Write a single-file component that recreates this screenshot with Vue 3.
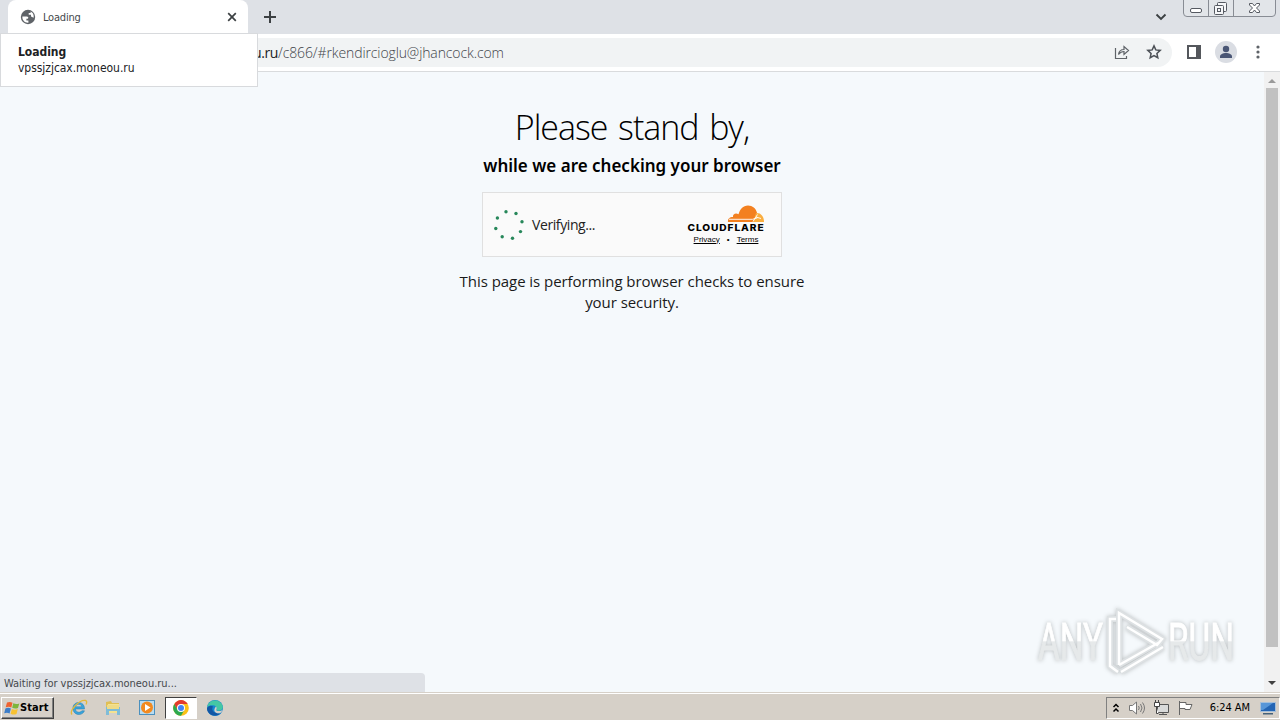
<template>
  <div class="desktop">
    <header class="tab-strip">
      <div class="tab">
        <svg class="globe" viewBox="0 0 16 16" width="16" height="16">
          <circle cx="8" cy="8" r="7.2" fill="#5f6368" />
          <path d="M2.4 7.5h4.2c1.8 0 2.2 1.4 1.2 2.2H6.4v1.8h2v2.2C4.700 14 2 11 2.400 7.500zM7 2.500h3.600v1.600H8.700v1.700H11v1.700l2.600 1.300c.7-3-1-5.500-3-6.300z" fill="#fff" />
        </svg>
        <span class="tab-title">Loading</span>
        <svg class="tab-close" viewBox="0 0 10 10" width="10" height="10">
          <path d="M1.200 1.200l7.600 7.600M8.800 1.200L1.200 8.800" stroke="#3c4043" stroke-width="1.700" />
        </svg>
      </div>
      <svg class="new-tab" viewBox="0 0 12 12" width="12" height="12">
        <path d="M6 0v12M0 6h12" stroke="#3c4043" stroke-width="2" />
      </svg>
      <svg class="tab-search" viewBox="0 0 12 8" width="12" height="8">
        <path d="M1.500 1.500L6 6l4.500-4.500" fill="none" stroke="#3c4043" stroke-width="1.900" />
      </svg>
      <svg class="window-buttons" viewBox="0 0 94 18" width="94" height="18">
        <path d="M.5 0v13q0 3.500 3.500 3.500h85q3.500 0 3.500-3.500V0" fill="#e2e5e9" stroke="#888c94" />
        <path d="M25.500 0v16M50.500 0v16" stroke="#888c94" />
        <rect x="7.500" y="8.500" width="11" height="4" rx="1.500" fill="#fff" stroke="#555961" />
        <g fill="#f5f6f8" stroke="#555961">
          <rect x="34.500" y="2.500" width="9" height="9" rx="1" />
          <rect x="31.500" y="5.500" width="9" height="9" rx="1" />
          <rect x="34.500" y="8.500" width="3" height="3" />
        </g>
        <path d="M66.500 3.500h3l2 2.500 2-2.500h3v1.500l-3 3 3 3v1.500h-3l-2-2.500-2 2.500h-3V11l3-3-3-3z" fill="#fff" stroke="#555961" />
      </svg>
    </header>

    <div class="toolbar">
      <div class="omnibox">
        <span class="url"><b>u.ru</b>/c866/#rkendircioglu@jhancock.com</span>
        <svg class="share" viewBox="0 0 16 16" width="16" height="16">
          <path d="M1.500 4v10.500h11V12M4.500 10.500c.5-3.500 2.500-5 5.500-5v-3l4.500 4-4.500 4v-3c-2.500 0-4 1-5.500 3z" fill="none" stroke="#5f6368" stroke-width="1.200" />
        </svg>
        <svg class="star" viewBox="0 0 16 16" width="16" height="16">
          <path d="M8 1.900l1.800 4 4.400.5-3.300 3 .9 4.300L8 11.500l-3.800 2.200.9-4.300-3.300-3 4.400-.5z" fill="none" stroke="#4d5157" stroke-width="1.500" />
        </svg>
      </div>
      <svg class="side-panel" viewBox="0 0 14 14" width="14" height="14">
        <path d="M0 0h14v14H0zM2 2v10h7V2z" fill="#54575c" fill-rule="evenodd" />
      </svg>
      <svg class="avatar" viewBox="0 0 22 22" width="22" height="22">
        <circle cx="11" cy="11" r="11" fill="#dadde3" />
        <circle cx="11" cy="8" r="3.200" fill="#4a5675" />
        <path d="M5 17v-1.500c0-2.300 3-3.500 6-3.500s6 1.200 6 3.500V17z" fill="#4a5675" />
      </svg>
      <svg class="menu" viewBox="0 0 4 14" width="4" height="14">
        <circle v-for="y in [2, 7, 12]" :key="y" cx="2" :cy="y" r="1.600" fill="#5f6368" />
      </svg>
    </div>

    <div class="viewport">
      <main class="page">
        <h1><span>Please stand by,</span></h1>
        <h2><span>while we are checking your browser</span></h2>
        <div class="challenge">
          <svg class="spinner" viewBox="0 0 30 30" width="30" height="30">
            <circle v-for="(dot, i) in dots" :key="i" :cx="dot[0]" :cy="dot[1]" r="1.700" fill="#27875a" />
          </svg>
          <span class="verifying">Verifying...</span>
          <div class="brand">
            <svg viewBox="0 0 78 28" width="78" height="28">
              <path d="M41 18c-.5-3 1.500-5 5-5-.5-3 3-4.500 5.500-2.700C53 5 56 1.500 61 1.500c4.500 0 8 3 9 7.200L67 18z" fill="#f38020" />
              <path d="M69 9c4.500-.5 8 3 8 9H66z" fill="#faae40" />
              <path d="M42 15.300h23.500l5-1.500M66 17.500l4.500-7M69 13l5 1.500" fill="none" stroke="#fff" stroke-width=".9" />
              <text x="0.500" y="27" textLength="77" lengthAdjust="spacingAndGlyphs" class="wordmark">CLOUDFLARE</text>
            </svg>
            <div class="links"><a>Privacy</a><i>•</i><a>Terms</a></div>
          </div>
        </div>
        <p><span>This page is performing browser checks to ensure</span><br /><span class="line-two">your security.</span></p>

        <svg class="watermark" viewBox="0 0 204 70" width="204" height="70">
          <defs>
            <linearGradient id="fade" gradientUnits="userSpaceOnUse" x1="0" y1="16" x2="0" y2="54">
              <stop offset=".46" stop-color="#fff" />
              <stop offset=".5" stop-color="#e6e9ea" />
            </linearGradient>
          </defs>
          <text x="4" y="53" textLength="65" lengthAdjust="spacingAndGlyphs">ANY</text>
          <text x="134" y="53" textLength="66" lengthAdjust="spacingAndGlyphs">RUN</text>
          <path :d="logo" class="outline" />
          <path :d="logo" class="mark" />
        </svg>
        <div class="status">Waiting for vpssjzjcax.moneou.ru...</div>
      </main>
      <div class="scrollbar">
        <svg viewBox="0 0 8 4" width="8" height="4"><path d="M0 4l4-4 4 4z" fill="#9a9a9a" /></svg>
        <div class="thumb"></div>
        <svg class="down" viewBox="0 0 8 4" width="8" height="4"><path d="M0 0l4 4 4-4z" fill="#404040" /></svg>
      </div>
    </div>

    <footer class="taskbar">
      <button class="start">
        <svg viewBox="0 0 16 16" width="16" height="16">
          <path d="M3 2.500c2-1 4-.7 5.500.2L7.300 7.500C5.500 6.500 4 6.500 1.700 7.300z" fill="#ee6230" />
          <path d="M9.300 3.200c2 1 3.800 1 6 .2L14 8c-2.300 1-4 .7-5.800-.2z" fill="#7db53c" />
          <path d="M1.400 8.400c2-.9 3.800-.8 5.500.1l-1.300 5c-1.800-1-3.300-1-5.400-.2z" fill="#3c7dc8" />
          <path d="M7.900 9c1.900.9 3.600 1 5.900.1l-1.300 4.800c-2.200 1-4 .8-5.900-.2z" fill="#f8c231" />
        </svg>
        <span>Start</span>
      </button>
      <div class="apps">
        <div class="app">
          <svg viewBox="0 0 18 18" width="18" height="18">
            <path d="M14.500 10H5.300c.4 3.500 5 4.200 6.500 1.800h2.700c-2.500 6-11.600 4.500-11.600-2.600 0-7.500 11.800-8 11.600.8zM5.500 7.800h6.400C11.300 4.500 6.200 4.500 5.500 7.800z" fill="#38a5dc" stroke="#2478ae" stroke-width=".5" />
            <path d="M2 15.500C-1 12 9 .5 15.500 1.500c1.500.3 1.500 2 .5 4" fill="none" stroke="#e3b93a" stroke-width="1.300" />
          </svg>
        </div>
        <div class="app">
          <svg viewBox="0 0 18 18" width="18" height="18">
            <path d="M2 3l5-1 1 2h7v10H2z" fill="#e0bf55" />
            <path d="M4 5h11l1 9H3z" fill="#f5e290" />
            <path d="M2 8h14v8h-3v-4H5v4H2z" fill="#7fbcd8" />
            <path d="M3 6h12v4H3z" fill="#efdb86" />
          </svg>
        </div>
        <div class="app">
          <svg viewBox="0 0 18 18" width="18" height="18">
            <rect x="1.500" y="1.500" width="15" height="14" fill="#b9dcf1" stroke="#4b90be" />
            <circle cx="9" cy="8.500" r="6" fill="#f28a20" />
            <path d="M7 5v7l5.500-3.500z" fill="#fff" />
          </svg>
        </div>
        <div class="app active">
          <svg viewBox="0 0 16 16" width="16" height="16">
            <circle cx="8" cy="8" r="7.800" fill="#fbc116" />
            <path d="M1.300 4A7.800 7.800 0 0 1 14.800 4H8L4.600 10z" fill="#e33b2e" />
            <path d="M1.300 4A7.800 7.800 0 0 0 8 15.800l3.400-5.900H4.600z" fill="#2da94f" />
            <circle cx="8" cy="8" r="4" fill="#fff" />
            <circle cx="8" cy="8" r="3" fill="#4285f4" />
          </svg>
        </div>
        <div class="app">
          <svg viewBox="0 0 18 18" width="18" height="18">
            <circle cx="9" cy="9" r="8" fill="#1685d1" />
            <path d="M1.500 7C3 0 14.500-1 16.800 7.500c.5 4-3.800 5-6.500 3.800 1.500-3-1-5.500-4-5C4 6 2 7 1.500 9z" fill="#45c7a4" />
            <path d="M7 7.500c-2 3 0 7.500 7.500 7C9 19 1 15.500 1 9.500 2 6.500 5 6 7 7.500z" fill="#1357a4" />
            <path d="M10 7.500c1.200 1.200.7 2.500.2 3.700 2 1.500 5 .8 6.500-.4-.7 2-1.700 3-3 3.500-5 .5-7-3-3.700-6.800z" fill="#d6d0c8" />
          </svg>
        </div>
      </div>
      <div class="tray">
        <svg class="chevrons" viewBox="0 0 8 10" width="8" height="10">
          <path d="M1.500 4L4 1.500 6.500 4M1.500 8.500L4 6l2.500 2.500" fill="none" stroke="#000" stroke-width="1.500" />
        </svg>
        <svg viewBox="0 0 18 16" width="18" height="16">
          <path d="M1.500 5.500h3L8.500 2v12l-4-3.500h-3z" fill="#fff" stroke="#777" />
          <path d="M10.500 6q1.500 2 0 4M12.500 4q3 4 0 8M14.500 2.500q4 5.500 0 11" fill="none" stroke="#777" />
        </svg>
        <svg class="network" viewBox="0 0 18 16" width="18" height="16">
          <path d="M4.500 4.500h11v8h-11zM6 14.500h8M10 12.500v2" fill="#d9dada" stroke="#555" />
          <path d="M2.500 0v3M5.500 0v3M1.500 2.500h5v4h-5zM3.500 6.500v7h2" fill="#fff" stroke="#444" />
        </svg>
        <svg class="flag" viewBox="0 0 18 16" width="18" height="16">
          <path d="M2.500 1v14M3 2.500h6v2h6l-2 5H8v-1H3" fill="#fff" stroke="#666" />
        </svg>
        <span class="clock">6:24 AM</span>
        <svg class="show-desktop" viewBox="0 0 16 14" width="16" height="14">
          <path d="M.5 1.500h15v9H.5z" fill="#2465b4" stroke="#a4bfda" />
          <path d="M1 2h12L3 9H1z" fill="#5796d8" />
          <path d="M3 12h10v1.500H3z" fill="#456179" />
        </svg>
      </div>
    </footer>

    <div class="tab-tooltip">
      <strong>Loading</strong>
      <span>vpssjzjcax.moneou.ru</span>
    </div>
  </div>
</template>

<script setup>
const dots = [
  [12, 1.800], [22, 3.500], [28, 11.700], [26.500, 21.600],
  [18.500, 28.200], [8.200, 26.700], [1.800, 18.500], [3.400, 8],
]

// play triangle with a second edge behind it
const logo = 'M82 12h-6v47l8 6M85 58V6l43 26-5 6-30-18M85 58l39-22M87 65l42-25'
</script>

<style>
body {
  margin: 0;
  overflow: hidden;
}
</style>

<style scoped>
.desktop {
  position: relative;
  display: flex;
  flex-direction: column;
  width: 1280px;
  height: 720px;
  font-family: "Noto Sans", "Open Sans", sans-serif;
  color: #000;
}

svg {
  display: block;
  flex: none;
}

span,
strong {
  white-space: nowrap;
}

.tab-strip {
  display: flex;
  height: 34px;
  background: #dee1e6;
}

.tab {
  display: flex;
  align-items: center;
  box-sizing: border-box;
  width: 240px;
  margin-left: 8px;
  padding: 0 11px 0 12px;
  background: #fff;
  border-radius: 8px 8px 0 0;
}

.tab-title {
  flex: 1;
  margin-left: 7px;
  font-family: "DejaVu Sans Condensed", "DejaVu Sans", sans-serif;
  font-size: 11px;
  letter-spacing: -0.200px;
  color: #45484c;
}

.new-tab {
  margin: 11px 0 0 16px;
}

.tab-search {
  margin: 13px 16px 0 auto;
}

.window-buttons {
  margin-right: 3px;
}

.toolbar {
  display: flex;
  align-items: center;
  box-sizing: border-box;
  height: 38px;
  padding: 0 20px 1px 0;
  background: #fff;
  border-bottom: 1px solid #d9dbdd;
}

.omnibox {
  display: flex;
  align-items: center;
  box-sizing: border-box;
  width: 1092px;
  height: 29px;
  margin-left: 80px;
  padding: 0 10px 0 173px;
  background: #f1f3f4;
  border-radius: 15px;
}

.url {
  flex: 1;
  font-family: "Open Sans", sans-serif;
  font-size: 14px;
  font-weight: 300;
  letter-spacing: -0.110px;
  color: #3f4449;
}

.url b {
  font-weight: 400;
  letter-spacing: -0.400px;
  color: #202124;
}

.star {
  margin-left: 16px;
}

.side-panel {
  margin-left: 15px;
}

.avatar {
  margin-left: 14px;
}

.menu {
  margin-left: auto;
}

.viewport {
  display: flex;
  height: 620px;
}

.page {
  position: relative;
  display: flex;
  flex-direction: column;
  align-items: center;
  width: 1264px;
  background: #f5f9fc;
}

h1 {
  margin: 33px 0 0;
  font-family: "Open Sans", sans-serif;
  font-size: 34px;
  font-weight: 300;
  line-height: 44px;
  letter-spacing: -1.050px;
  word-spacing: 3px;
}

h2 {
  margin: 5px 0 0;
  font-family: "Noto Sans", sans-serif;
  font-size: 17px;
  font-weight: 600;
  line-height: 24px;
}

.challenge {
  display: flex;
  align-items: center;
  box-sizing: border-box;
  width: 300px;
  height: 65px;
  margin-top: 14px;
  padding: 0 16px 0 11px;
  background: #fafafa;
  border: 1px solid #e0e0e0;
}

.verifying {
  margin-left: 8px;
  font-family: "Open Sans", sans-serif;
  font-size: 14px;
  letter-spacing: -0.400px;
  color: #222;
}

.brand {
  width: 78px;
  margin-left: auto;
}

.brand svg {
  overflow: visible;
}

.wordmark {
  font-family: Inter, sans-serif;
  font-size: 9px;
  font-weight: 800;
  letter-spacing: 0.800px;
}

.links {
  display: flex;
  justify-content: center;
  gap: 7px;
  margin-top: 2px;
  font-family: "Liberation Sans", sans-serif;
  font-size: 8px;
  line-height: 12px;
}

.links a {
  text-decoration: underline;
}

.links i {
  font-style: normal;
}

p {
  margin: 14px 0 0;
  font-family: "Open Sans", sans-serif;
  font-size: 15px;
  line-height: 21px;
  letter-spacing: -0.050px;
  text-align: center;
  color: #1a1a1a;
}

.watermark {
  position: absolute;
  left: 1034px;
  top: 535px;
  overflow: visible;
  filter: drop-shadow(0 0 2px #b9bdbf);
}

.watermark text {
  font-family: Roboto, sans-serif;
  font-size: 52px;
  fill: url(#fade);
  stroke: url(#fade);
  stroke-width: 0.800;
}

.mark,
.outline {
  fill: none;
  stroke: #fff;
  stroke-width: 2.500;
}

.outline {
  stroke: #dde1e3;
  stroke-width: 6;
}

.status {
  position: absolute;
  left: 0;
  bottom: 0;
  box-sizing: border-box;
  width: 425px;
  height: 19px;
  padding-left: 4px;
  background: #dee1e6;
  border-top-right-radius: 4px;
  font-family: "DejaVu Sans Condensed", "DejaVu Sans", sans-serif;
  font-size: 11px;
  line-height: 21px;
  letter-spacing: -0.030px;
  color: #45484c;
}

.scrollbar {
  display: flex;
  flex-direction: column;
  align-items: center;
  width: 16px;
  padding-top: 7px;
  box-sizing: border-box;
  background: #f1f1f1;
}

.thumb {
  width: 12px;
  height: 559px;
  margin-top: 5px;
  background: #c1c1c1;
}

.down {
  margin-top: 34px;
}

.taskbar {
  display: flex;
  align-items: center;
  box-sizing: border-box;
  height: 28px;
  padding: 3px 0 1px 1px;
  background: #d6d0c8;
  border-top: 1px solid #d6d0c8;
  box-shadow: inset 0 1px #fff;
}

.start {
  display: flex;
  align-items: center;
  box-sizing: border-box;
  width: 53px;
  height: 22px;
  padding: 0 2px;
  background: #d6d0c8;
  border: 1px solid;
  border-color: #fff #404040 #404040 #fff;
  box-shadow: inset -1px -1px #808080;
  font-family: "DejaVu Sans Condensed", "DejaVu Sans", sans-serif;
  font-size: 11px;
  font-weight: bold;
  letter-spacing: 0.100px;
}

.apps {
  display: flex;
  gap: 2px;
  margin-left: 9px;
}

.app {
  display: flex;
  align-items: center;
  justify-content: center;
  box-sizing: border-box;
  width: 32px;
  height: 22px;
}

.active {
  background: #fff;
  border: 1px solid;
  border-color: #404040 #fff #fff #404040;
}

.tray {
  display: flex;
  align-items: center;
  box-sizing: border-box;
  width: 174px;
  height: 22px;
  margin-left: auto;
  padding: 0 3px 0 5px;
  border: 1px solid;
  border-color: #808080 #fff #fff #808080;
}

.chevrons {
  margin-right: 8px;
}

.network {
  margin-left: 7px;
}

.flag {
  margin-left: 6px;
}

.clock {
  margin-left: auto;
  font-family: "DejaVu Sans Condensed", "DejaVu Sans", sans-serif;
  font-size: 11px;
  letter-spacing: -0.060px;
}

.show-desktop {
  margin-left: 10px;
}

.tab-tooltip {
  position: absolute;
  left: 0;
  top: 33px;
  display: flex;
  flex-direction: column;
  box-sizing: border-box;
  width: 258px;
  height: 54px;
  padding: 10px 17px;
  background: #fff;
  border: 1px solid #d8dadd;
  font-family: "DejaVu Sans Condensed", "DejaVu Sans", sans-serif;
  font-size: 12px;
  line-height: 16px;
  letter-spacing: -0.040px;
  color: #202124;
}
</style>
